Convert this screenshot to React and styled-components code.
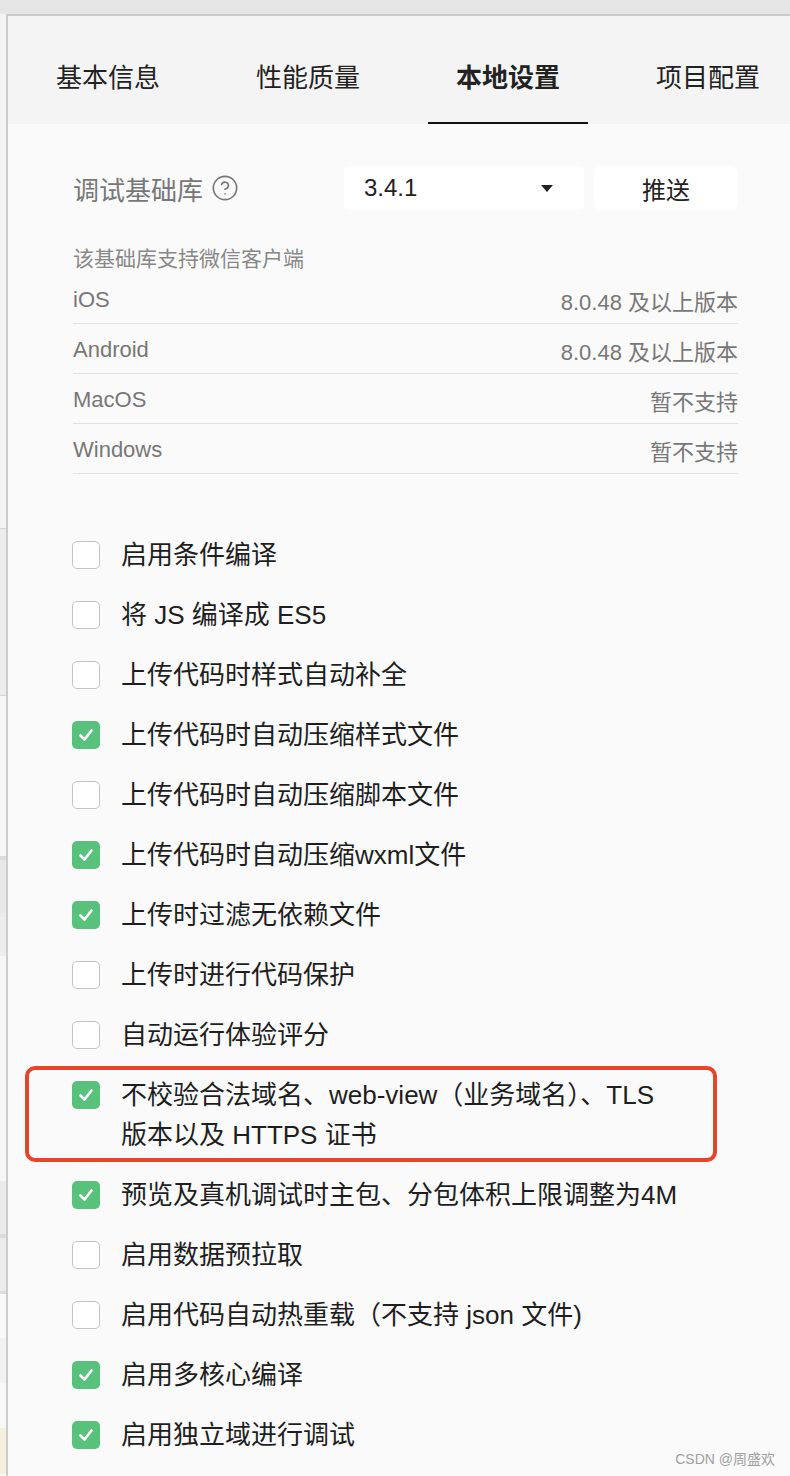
import React from "react";
import styled, { createGlobalStyle } from "styled-components";
import { CircleHelp } from "lucide-react";

const tabs = ["基本信息", "性能质量", "本地设置", "项目配置"];

const platforms = [
  { name: "iOS", value: "8.0.48 及以上版本" },
  { name: "Android", value: "8.0.48 及以上版本" },
  { name: "MacOS", value: "暂不支持" },
  { name: "Windows", value: "暂不支持" },
];

const options = [
  { label: "启用条件编译", checked: false },
  { label: "将 JS 编译成 ES5", checked: false },
  { label: "上传代码时样式自动补全", checked: false },
  { label: "上传代码时自动压缩样式文件", checked: true },
  { label: "上传代码时自动压缩脚本文件", checked: false },
  { label: "上传代码时自动压缩wxml文件", checked: true },
  { label: "上传时过滤无依赖文件", checked: true },
  { label: "上传时进行代码保护", checked: false },
  { label: "自动运行体验评分", checked: false },
  {
    label: ["不校验合法域名、web-view（业务域名）、TLS", "版本以及 HTTPS 证书"],
    checked: true,
    marked: true,
  },
  { label: "预览及真机调试时主包、分包体积上限调整为4M", checked: true },
  { label: "启用数据预拉取", checked: false },
  { label: "启用代码自动热重载（不支持 json 文件)", checked: false },
  { label: "启用多核心编译", checked: true },
  { label: "启用独立域进行调试", checked: true },
];

// what peeks out of the window behind the panel
const bands = [
  { h: 514, c: "#f4f4f4" },
  { h: 1, c: "#d6d6d6" },
  { h: 166, c: "#ececec" },
  { h: 1, c: "#d6d6d6" },
  { h: 160, c: "#f6f6f6" },
  { h: 4, c: "#dcdcdc" },
  { h: 53, c: "#e8e8e8" },
  { h: 43, c: "#ededed" },
  { h: 225, c: "#f6f6f6" },
  { h: 53, c: "#ebebeb" },
  { h: 4, c: "#dcdcdc" },
  { h: 53, c: "#ececec" },
  { h: 3, c: "#dcdcdc" },
  { h: 44, c: "#f8f8f8" },
  { h: 45, c: "#f2f2f2" },
  { h: 45, c: "#f8f8f8" },
  { h: 46, c: "#f5f1de" },
];

const Checkmark = () => (
  <svg width="18" height="18" viewBox="0 0 18 18">
    <polyline
      points="3.5,9.5 7.5,13.5 14.5,4.5"
      fill="none"
      stroke="#fff"
      strokeWidth="2.6"
      strokeLinecap="round"
      strokeLinejoin="round"
    />
  </svg>
);

const App = () => (
  <>
    <GlobalStyle />
    <TopBar />
    <Body>
      <SideStrip>
        {bands.map((b, i) => (
          <Band key={i} $h={b.h} $c={b.c} />
        ))}
      </SideStrip>
      <Panel>
        <TabBar>
          {tabs.map((t) => (
            <Tab key={t} $active={t === "本地设置"}>
              {t}
            </Tab>
          ))}
        </TabBar>
        <Content>
          <LibRow>
            <LibLabel>
              调试基础库
              <CircleHelp size={28} strokeWidth={1.4} color="#777" />
            </LibLabel>
            <Select>
              <span>3.4.1</span>
              <Caret />
            </Select>
            <PushButton>推送</PushButton>
          </LibRow>
          <Subtitle>该基础库支持微信客户端</Subtitle>
          <PlatformList>
            {platforms.map((p) => (
              <PlatformRow key={p.name}>
                <span>{p.name}</span>
                <span>{p.value}</span>
              </PlatformRow>
            ))}
          </PlatformList>
          <OptionList>
            {options.map((o, i) => (
              <Option key={i}>
                {o.marked && <Highlight />}
                <Box $checked={o.checked}>{o.checked && <Checkmark />}</Box>
                <OptionText>
                  {Array.isArray(o.label)
                    ? o.label.map((line) => <div key={line}>{line}</div>)
                    : o.label}
                </OptionText>
              </Option>
            ))}
          </OptionList>
        </Content>
      </Panel>
    </Body>
    <Watermark>CSDN @周盛欢</Watermark>
  </>
);

const GlobalStyle = createGlobalStyle`
  body {
    margin: 0;
    background: #fafafa;
    font-family: "Liberation Sans", "Noto Sans CJK SC", sans-serif;
    color: #222;
    overflow: hidden;
  }
`;

const TopBar = styled.div`
  height: 14px;
  background: #e6e6e6;
`;

const Body = styled.div`
  display: flex;
  min-height: 1462px;
`;

const SideStrip = styled.div`
  width: 6px;
  flex-shrink: 0;
  display: flex;
  flex-direction: column;
`;

const Band = styled.div`
  height: ${(p) => p.$h}px;
  background: ${(p) => p.$c};
  flex-shrink: 0;
`;

const Panel = styled.div`
  flex: 1;
  min-width: 0;
  overflow: hidden;
  border-top: 2px solid #cccccc;
  border-left: 2px solid #cccccc;
  background: #fafafa;
`;

const TabBar = styled.div`
  height: 108px;
  background: #f4f4f4;
  display: flex;
`;

const Tab = styled.div`
  width: 200px;
  flex-shrink: 0;
  display: flex;
  align-items: center;
  justify-content: center;
  position: relative;
  box-sizing: border-box;
  padding-top: 10px;
  font-size: 26px;
  font-weight: ${(p) => (p.$active ? 700 : 400)};
  color: #222;

  &::after {
    content: "";
    display: ${(p) => (p.$active ? "block" : "none")};
    position: absolute;
    left: 20px;
    right: 20px;
    bottom: 0;
    height: 2px;
    background: #111;
  }
`;

const Content = styled.div`
  padding: 42px 52px 0 65px;
`;

const LibRow = styled.div`
  display: flex;
  align-items: center;
  height: 44px;
`;

const LibLabel = styled.div`
  width: 271px;
  display: flex;
  align-items: center;
  gap: 8px;
  font-size: 26px;
  color: #777;
`;

const Select = styled.div`
  width: 240px;
  height: 44px;
  box-sizing: border-box;
  background: #fff;
  border-radius: 6px;
  display: flex;
  align-items: center;
  justify-content: space-between;
  padding: 0 31px 0 20px;
  font-size: 24px;
  color: #222;
`;

const Caret = styled.span`
  width: 0;
  height: 0;
  border-left: 6px solid transparent;
  border-right: 6px solid transparent;
  border-top: 7px solid #222;
`;

const PushButton = styled.div`
  width: 144px;
  height: 44px;
  margin-left: 10px;
  background: #fff;
  border-radius: 6px;
  display: flex;
  align-items: center;
  justify-content: center;
  font-size: 24px;
  color: #222;
`;

const Subtitle = styled.div`
  margin-top: 34px;
  line-height: 30px;
  font-size: 21px;
  color: #888;
`;

const PlatformList = styled.div`
  margin-bottom: 51px;
`;

const PlatformRow = styled.div`
  height: 50px;
  padding-top: 3px;
  box-sizing: border-box;
  border-bottom: 1px solid #e1e1e1;
  display: flex;
  align-items: center;
  justify-content: space-between;
  font-size: 22px;
  color: #777;
`;

const OptionList = styled.div`
  display: flex;
  flex-direction: column;
`;

const Option = styled.div`
  position: relative;
  display: flex;
  align-items: flex-start;
  padding: 10px 0;
`;

const Highlight = styled.div`
  position: absolute;
  left: -48px;
  top: 1px;
  width: 692px;
  height: 96px;
  box-sizing: border-box;
  border: 4px solid #e8432b;
  border-radius: 10px;
  pointer-events: none;
`;

const Box = styled.div`
  width: 28px;
  height: 28px;
  margin-top: 6px;
  margin-left: -1px;
  margin-right: 21px;
  flex-shrink: 0;
  box-sizing: border-box;
  border-radius: 5px;
  display: flex;
  align-items: center;
  justify-content: center;
  background: ${(p) => (p.$checked ? "#58c27c" : "#fff")};
  border: ${(p) => (p.$checked ? "none" : "1.5px solid #c4c4c4")};
`;

const OptionText = styled.div`
  font-size: 26px;
  line-height: 40px;
  color: #1e1e1e;
`;

const Watermark = styled.div`
  position: absolute;
  right: 15px;
  top: 1448px;
  font-size: 14px;
  color: #a0a0a0;
`;

export default App;
